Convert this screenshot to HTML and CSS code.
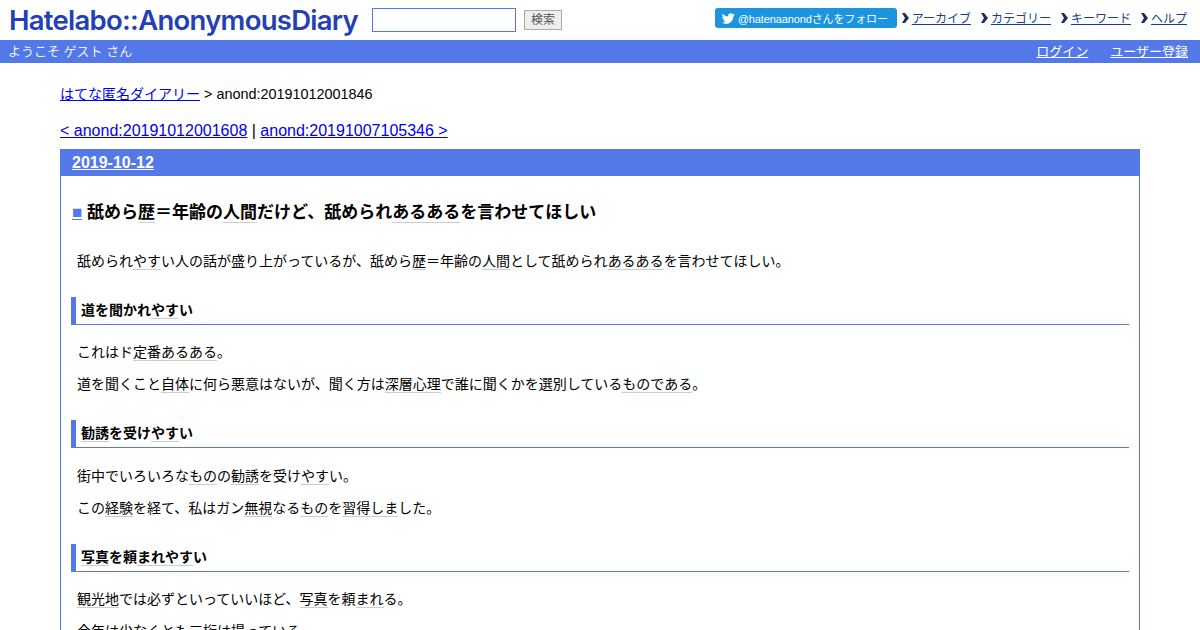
FILE: index.html
```html
<!DOCTYPE html>
<html lang="ja">
<head>
<meta charset="utf-8">
<title>舐められあるあるを言わせてほしい</title>
<link rel="stylesheet" href="styles.css">
</head>
<body>
<div class="page">
<header class="top">
  <div class="top-left">
    <a class="logo">Hatelabo::AnonymousDiary</a>
    <form class="search"><input class="search-input" type="text"><span class="search-button">検索</span></form>
  </div>
  <div class="top-right">
    <a class="follow"><svg class="bird" viewBox="0 0 24 24"><path d="M23.6 4.6c-.9.4-1.8.7-2.8.8 1-.6 1.8-1.6 2.1-2.7-.9.6-2 1-3.1 1.2C18.9 2.9 17.6 2.3 16.200 2.300c-2.700 0-4.900 2.200-4.900 4.900 0 .4 0 .8.100 1.100C7.300 8.100 3.700 6.100 1.300 3.200.900 3.900.600 4.800.600 5.700c0 1.700.900 3.200 2.200 4.100-.800 0-1.600-.2-2.200-.6v.1c0 2.400 1.700 4.400 3.900 4.800-.4.100-.8.200-1.300.2-.3 0-.6 0-.9-.1.600 2 2.400 3.400 4.600 3.400-1.700 1.300-3.800 2.100-6.100 2.100-.4 0-.8 0-1.200-.1 2.200 1.400 4.800 2.200 7.500 2.200 9.100 0 14-7.500 14-14v-.6c1-.7 1.800-1.600 2.500-2.500z"/></svg>@hatenaanondさんをフォロー</a>
    <ul class="menu">
      <li class="menu-item"><svg class="chev" viewBox="0 0 7 10"><path d="M0 0h3l4 5-4 5H0l3-5z"/></svg><a class="menu-link" href="#">アーカイブ</a></li>
      <li class="menu-item"><svg class="chev" viewBox="0 0 7 10"><path d="M0 0h3l4 5-4 5H0l3-5z"/></svg><a class="menu-link" href="#">カテゴリー</a></li>
      <li class="menu-item"><svg class="chev" viewBox="0 0 7 10"><path d="M0 0h3l4 5-4 5H0l3-5z"/></svg><a class="menu-link" href="#">キーワード</a></li>
      <li class="menu-item"><svg class="chev" viewBox="0 0 7 10"><path d="M0 0h3l4 5-4 5H0l3-5z"/></svg><a class="menu-link" href="#">ヘルプ</a></li>
    </ul>
  </div>
</header>
<div class="bar">
  <span>ようこそ ゲスト さん</span>
  <div class="bar-links"><a href="#">ログイン</a><a href="#">ユーザー登録</a></div>
</div>
<main class="body">
  <p class="crumb"><a class="crumb-link" href="#">はてな匿名ダイアリー</a> &gt; anond:20191012001846</p>
  <p class="pager"><a href="#">&lt; anond:20191012001608</a> | <a href="#">anond:20191007105346 &gt;</a></p>
  <section class="day">
    <h2 class="date"><a href="#">2019-10-12</a></h2>
    <div class="entry">
      <h3 class="title"><a class="square" href="#">■</a> 舐めら<span class="kw">歴</span>＝年齢の<span class="kw">人間</span>だけど、舐められ<span class="kw">あるある</span>を言わせてほしい</h3>
      <p>舐められ<span class="kw">やす</span>い人の話が盛り上がっているが、舐めら<span class="kw">歴</span>＝年齢の<span class="kw">人間</span>として舐められ<span class="kw">あるある</span>を言わせてほしい。</p>
      <h4 class="sub">道を聞かれ<span class="kw">やす</span>い</h4>
      <p>これはド<span class="kw">定番</span><span class="kw">あるある</span>。</p>
      <p>道を聞くこと<span class="kw">自体</span>に何ら悪意はないが、聞く方は<span class="kw">深層心理</span>で誰に聞くかを選別している<span class="kw">ものである</span>。</p>
      <h4 class="sub"><span class="kw">勧誘</span>を受け<span class="kw">やす</span>い</h4>
      <p>街中でいろいろな<span class="kw">もの</span>の<span class="kw">勧誘</span>を受け<span class="kw">やす</span>い。</p>
      <p>この<span class="kw">経験</span>を経て、私はガン<span class="kw">無視</span>なる<span class="kw">もの</span>を<span class="kw">習得しま</span>した。</p>
      <h4 class="sub"><span class="kw">写真</span>を頼<span class="kw">まれやす</span>い</h4>
      <p><span class="kw">観光地</span>では必ずといっていいほど、<span class="kw">写真</span>を頼<span class="kw">まれ</span>る。</p>
      <p>今年は少なくとも三桁は撮っている。</p>
    </div>
  </section>
</main>
</div>
</body>
</html>
```
FILE: styles.css
```css
html, body { margin: 0; padding: 0; height: 630px; overflow: hidden; background: #fff; }
body { font-family: "Liberation Sans", "Noto Sans CJK JP", sans-serif; font-size: 14px; color: #000; }
.page { display: flex; flex-direction: column; }
.top { height: 40px; display: flex; justify-content: space-between; padding: 0 13px 0 9px; box-sizing: border-box; }
.top-left { display: flex; align-items: center; }
.logo { font-family: "Inter", sans-serif; font-weight: 600; font-size: 27.5px; color: #2340b4; letter-spacing: -0.73px; width: 363px; line-height: 42px; white-space: nowrap; }
.search { display: flex; align-items: center; gap: 8px; }
.search-input { width: 144px; height: 24px; box-sizing: border-box; border: 1px solid #5279e7; padding: 0; margin: 0; background: #fff; }
.search-button { width: 38px; height: 20px; box-sizing: border-box; border: 1px solid #aaa; background: #eee; color: #555; font-size: 12px; line-height: 18px; text-align: center; }
.top-right { display: flex; align-items: flex-start; padding-top: 8px; }
.follow { display: flex; align-items: center; height: 20px; width: 182px; box-sizing: border-box; padding-left: 7px; background: #1b95e0; border-radius: 3px; color: #fff; font-size: 11px; letter-spacing: -0.12px; white-space: nowrap; }
.bird { width: 13px; height: 13px; fill: #fff; margin-right: 3px; }
.menu { display: flex; list-style: none; margin: 0; padding: 0 0 2px; height: 20px; box-sizing: border-box; align-items: center; }
.menu-item { display: flex; align-items: center; margin-left: 10px; }
.menu-item:first-child { margin-left: 5px; }
.chev { width: 7px; height: 10px; margin: 2px 3px 0 0; fill: #1c2f55; }
.menu-link { font-size: 12px; color: #123f8f; }
.bar { height: 23px; box-sizing: border-box; background: #5279e7; color: #eef; display: flex; justify-content: space-between; align-items: center; padding: 0 12px 2px 8px; font-size: 13px; }
.bar-links { display: flex; gap: 22px; }
.bar-links a { color: #fff; }
.body { padding: 0 60px; }
.crumb { margin: 22px 0 0; font-size: 14.4px; line-height: 18px; }
.crumb-link { font-size: 14px; }
.pager { margin: 18px 0 0; font-size: 16px; line-height: 20px; }
.day { margin-top: 8px; border: 1px solid #5b78d6; border-bottom: 0; }
.date { margin: 0; height: 26px; background: #5279e7; padding-left: 11px; font-size: 16px; line-height: 26px; }
.date a { color: #fff; text-decoration: underline; }
.entry { padding: 0 10px; }
.title { margin: 26px 0 0 1px; font-size: 17px; line-height: 22px; font-weight: 700; }
.square { color: #5279e7; text-decoration: underline; }
.entry p { margin: 0 0 0 6px; line-height: 21px; padding-top: 11px; }
.entry .title + p { padding-top: 27px; }
.sub { margin: 24.8px 0 0; height: 28px; box-sizing: border-box; border-left: 5px solid #5279e7; border-bottom: 1px solid #5b78d6; padding-left: 5px; font-size: 14px; line-height: 26px; font-weight: 700; }
.entry .sub + p { padding-top: 17.6px; }
.kw { border-bottom: 1px solid #ccc; }
```
